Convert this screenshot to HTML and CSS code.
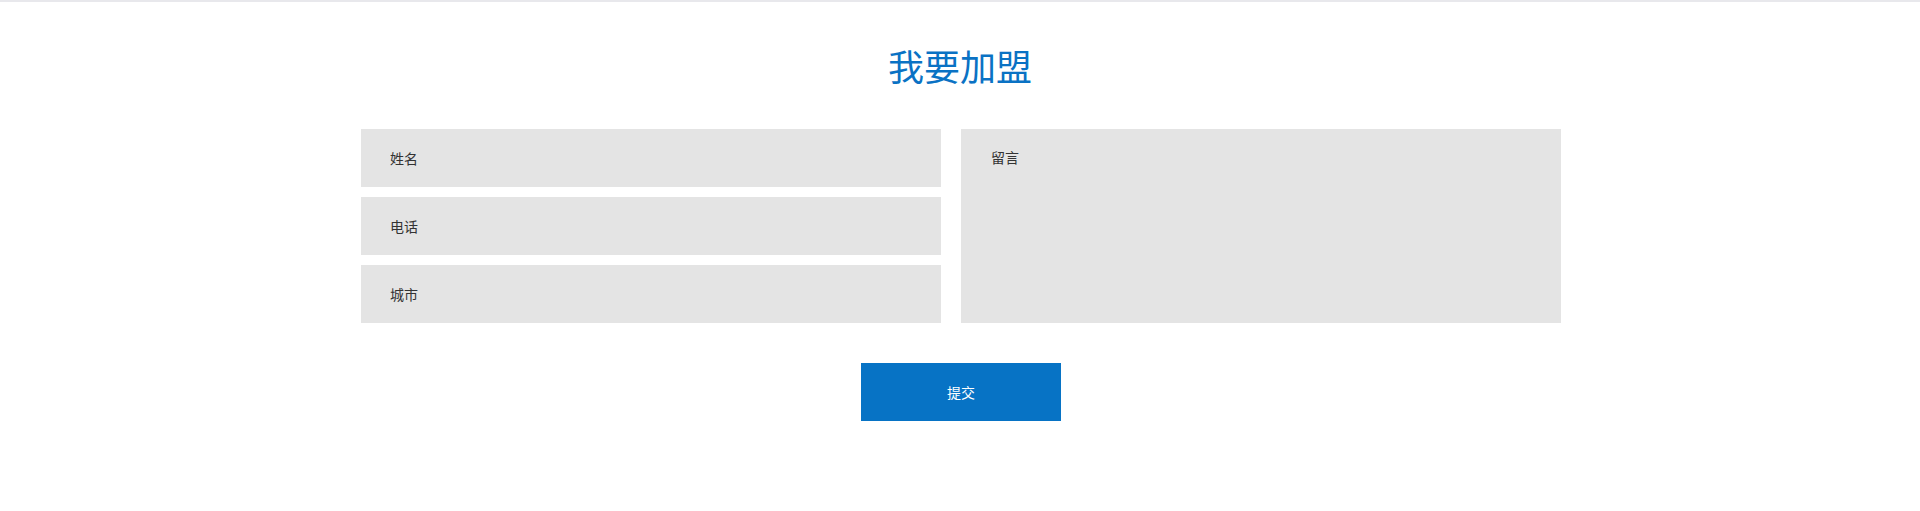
FILE: index.html
```html
<!DOCTYPE html>
<html lang="zh-CN">
<head>
  <meta charset="UTF-8" />
  <meta name="viewport" content="width=device-width, initial-scale=1.0"/>
  <title>我要加盟</title>
  <link rel="stylesheet" href="styles.css">
</head>
<body>
  <div class="join">
    <h2 class="join-title">我要加盟</h2>
    <form class="join-form">
      <div class="fields">
        <input type="text" class="field" placeholder="姓名">
        <input type="text" class="field" placeholder="电话">
        <input type="text" class="field" placeholder="城市">
      </div>
      <textarea class="message" placeholder="留言"></textarea>
    </form>
    <div class="actions">
      <button type="button" class="submit">提交</button>
    </div>
  </div>
</body>
</html>
```

FILE: styles.css
```css
:root {
  --primary: #0773c5;
  --field: #e4e4e4;
  --text: #333333;
}

body {
  margin: 0;
  padding: 0;
  border-top: 2px solid #e8e8ec;
  background: #ffffff;
  font-family: "Noto Sans CJK SC", "Noto Sans", sans-serif;
  color: var(--text);
}

.join {
  width: 1200px;
  margin: 0 auto;
}

.join-title {
  margin: 0;
  padding-top: 36px;
  font-size: 36px;
  line-height: 54px;
  font-weight: normal;
  text-align: center;
  color: #0a72c4;
}

.join-form {
  display: grid;
  grid-template-columns: 580px 600px;
  column-gap: 20px;
  margin: 37px 0 0 1px;
}

.fields {
  display: flex;
  flex-direction: column;
  gap: 10px;
}

.field,
.message {
  box-sizing: border-box;
  border: none;
  outline: none;
  background: var(--field);
  font-family: inherit;
  font-size: 14px;
  color: var(--text);
}

.field {
  height: 58px;
  padding: 0 29px;
}

.message {
  height: 194px;
  padding: 18px 30px;
  line-height: 20px;
  resize: none;
}

.field::placeholder,
.message::placeholder {
  color: var(--text);
  opacity: 1;
}

.actions {
  display: flex;
  justify-content: center;
  margin-top: 40px;
  padding-left: 2px;
}

.submit {
  width: 200px;
  height: 58px;
  border: none;
  background: var(--primary);
  color: #ffffff;
  font-family: inherit;
  font-size: 14px;
  cursor: pointer;
}
```
